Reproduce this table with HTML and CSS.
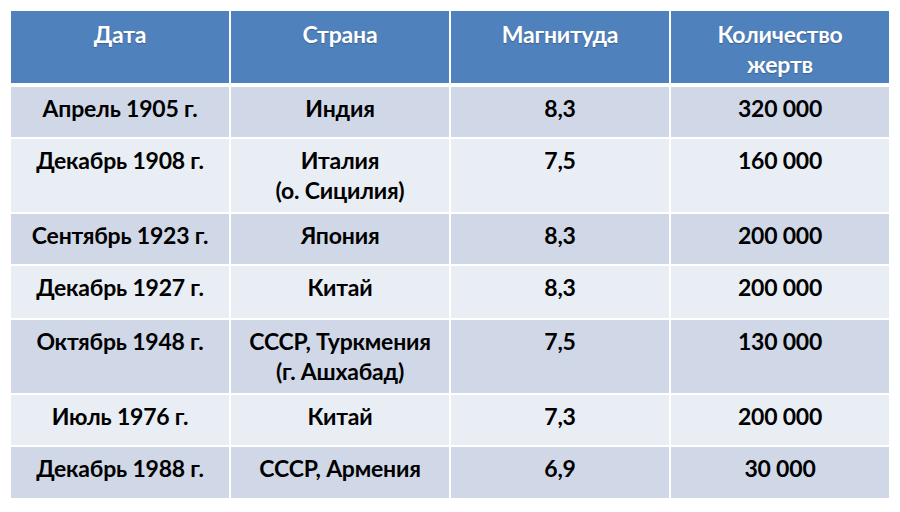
FILE: index.html
```html
<!DOCTYPE html>
<html lang="ru">
<head>
<meta charset="utf-8">
<link rel="stylesheet" href="styles.css">
</head>
<body>
<div class="table">
  <div class="row head">
    <div class="cell">Дата</div>
    <div class="cell">Страна</div>
    <div class="cell">Магнитуда</div>
    <div class="cell">Количество<br>жертв</div>
  </div>
  <div class="row odd single">
    <div class="cell">Апрель 1905 г.</div>
    <div class="cell">Индия</div>
    <div class="cell">8,3</div>
    <div class="cell">320 000</div>
  </div>
  <div class="row even double">
    <div class="cell">Декабрь 1908 г.</div>
    <div class="cell">Италия<br>(о. Сицилия)</div>
    <div class="cell">7,5</div>
    <div class="cell">160 000</div>
  </div>
  <div class="row odd single">
    <div class="cell">Сентябрь 1923 г.</div>
    <div class="cell">Япония</div>
    <div class="cell">8,3</div>
    <div class="cell">200 000</div>
  </div>
  <div class="row even single tall">
    <div class="cell">Декабрь 1927 г.</div>
    <div class="cell">Китай</div>
    <div class="cell">8,3</div>
    <div class="cell">200 000</div>
  </div>
  <div class="row odd double">
    <div class="cell">Октябрь 1948 г.</div>
    <div class="cell">СССР, Туркмения<br>(г. Ашхабад)</div>
    <div class="cell">7,5</div>
    <div class="cell">130 000</div>
  </div>
  <div class="row even single">
    <div class="cell">Июль 1976 г.</div>
    <div class="cell">Китай</div>
    <div class="cell">7,3</div>
    <div class="cell">200 000</div>
  </div>
  <div class="row odd single">
    <div class="cell">Декабрь 1988 г.</div>
    <div class="cell">СССР, Армения</div>
    <div class="cell">6,9</div>
    <div class="cell">30 000</div>
  </div>
</div>
</body>
</html>
```

FILE: styles.css
```css
html, body {
  margin: 0;
  padding: 0;
  background: #ffffff;
}
body {
  padding: 11px;
  font-family: Lato, "Open Sans", "DejaVu Sans", sans-serif;
}
.table {
  width: 878px;
  display: flex;
  flex-direction: column;
  gap: 2px;
}
.row {
  display: grid;
  grid-template-columns: repeat(4, 218px);
  column-gap: 2px;
}
.cell {
  text-align: center;
  font-weight: 700;
  font-size: 23px;
  line-height: 30px;
  color: #000000;
  padding-top: 6px;
  box-sizing: border-box;
  letter-spacing: -0.2px;
}
.head {
  height: 72px;
  margin-bottom: 2px;
}
.head .cell {
  background: #4f81bd;
  color: #ffffff;
  padding-top: 8px;
  text-shadow: 0 1px 1px rgba(0, 0, 0, 0.25);
}
.single { height: 50px; }
.single.tall { height: 52px; }
.double { height: 73px; }
.odd .cell { background: #d0d8e8; }
.even .cell { background: #e9edf4; }
.row:last-child { height: 51px; }
```
